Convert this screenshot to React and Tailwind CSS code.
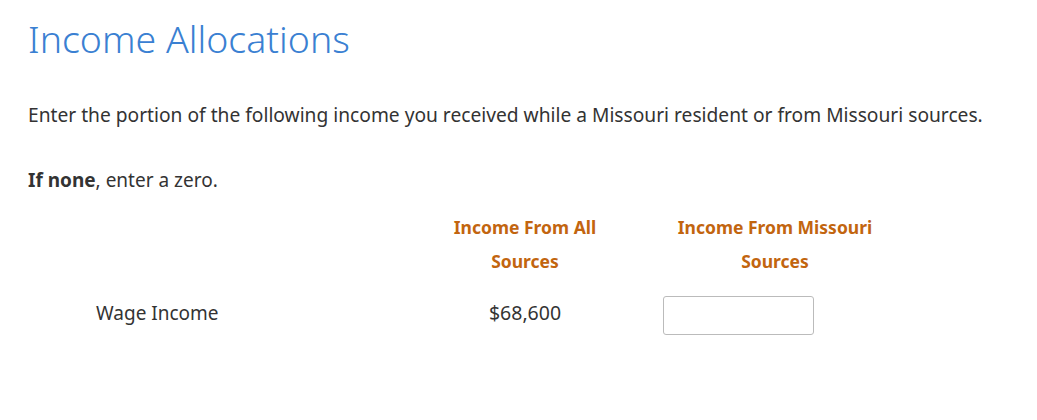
export default function App() {
  return (
    <div className="min-h-screen bg-white px-[28px] pt-[14px] text-[#333] font-['Noto_Sans','Open_Sans',sans-serif]">
      <h1 className="text-[37.5px] leading-[50px] font-light text-[#3a80d2]">Income Allocations</h1>

      <p className="mt-[38px] text-[19.2px] leading-[26px]">
        Enter the portion of the following income you received while a Missouri resident or from Missouri sources.
      </p>

      <p className="mt-[39px] text-[19px] leading-[26px]">
        <span className="font-bold">If none</span>, enter a zero.
      </p>

      <div className="mt-[17px] grid grid-cols-[372px_250px_250px]">
        <div></div>
        <div className="text-center text-[17.5px] leading-[34px] font-bold text-[#c2650f]">
          Income From All
          <br />
          Sources
        </div>
        <div className="text-center text-[17.5px] leading-[34px] font-bold text-[#c2650f]">
          Income From Missouri
          <br />
          Sources
        </div>

        <div className="pl-[68px] pt-[22px] text-[19px] leading-[26px]">Wage Income</div>
        <div className="pt-[22px] text-center text-[19.5px] leading-[26px]">$68,600</div>
        <div className="pt-[18px] pl-[13px]">
          <input
            type="text"
            className="h-[39px] w-[151px] rounded-[3px] border border-[#bbb] bg-white px-2 text-[16px] outline-none"
          />
        </div>
      </div>
    </div>
  );
}
